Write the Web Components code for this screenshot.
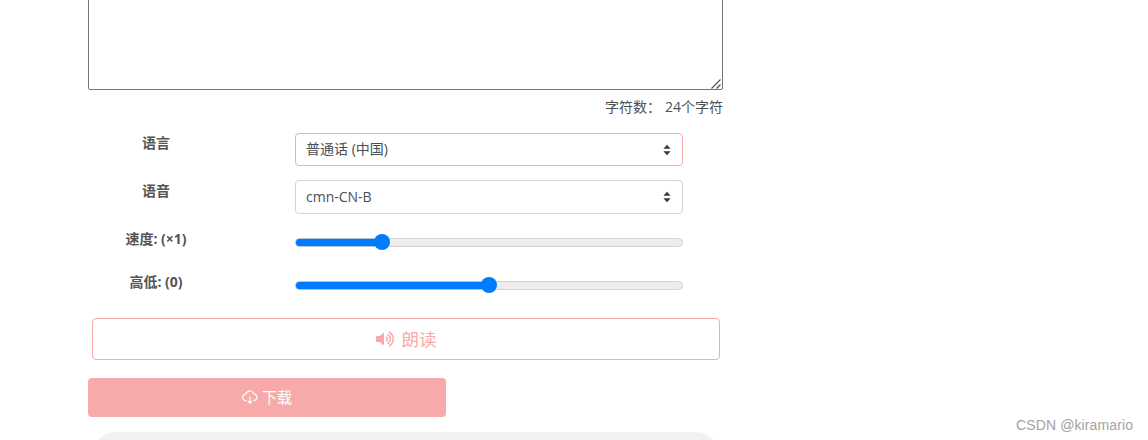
<!DOCTYPE html>
<html lang="zh"><head><meta charset="utf-8"><title>TTS</title>
<style>
html,body{margin:0;padding:0;background:#fff;}
body{height:440px;overflow:hidden;font-family:"Open Sans","Noto Sans CJK SC",sans-serif;color:#495057;font-size:14px;}
</style></head><body>
<tts-app></tts-app>
<tts-mark>CSDN @kiramario</tts-mark>
<template id="t-mark"><style>
:host{display:block;position:absolute;left:1016px;top:416px;width:125px;font:14px/18px "Liberation Sans",sans-serif;color:#a3a3a3;letter-spacing:.12px;white-space:nowrap}
</style><slot></slot></template>
<template id="t-row"><style>
:host{display:flex;align-items:flex-start;height:var(--h,47px);}
.l{width:136px;margin-right:71px;margin-top:var(--lt,0px);text-align:center;font-weight:700;font-size:14px;line-height:20px;color:#555;flex:none}
.c{width:388px;flex:none;padding-top:var(--ct,0px)}
</style><div class="l" part="label"><slot name="label"></slot></div><div class="c"><slot></slot></div></template>
<template id="t-select"><style>
:host{display:block;position:relative;height:var(--sh,34px);}
select{appearance:none;-webkit-appearance:none;display:block;width:100%;height:100%;box-sizing:border-box;background:#fff;border:1px solid var(--b,#ced4da);border-radius:4px;padding:0 30px 2px 10px;font:14px "Open Sans","Noto Sans CJK SC",sans-serif;color:#495057;outline:none;margin:0}
svg{position:absolute;right:12px;top:50%;margin-top:-6px;width:8px;height:12px;pointer-events:none}
</style><select></select><svg viewBox="0 0 8 12"><path fill="#343a40" d="M4 .8 7.6 4.8H.4zM4 11.2.4 7.2h7.2z"/></svg></template>
<template id="t-slider"><style>
:host{display:block;height:16px;}
input{appearance:none;-webkit-appearance:none;display:block;width:100%;height:16px;margin:0;padding:0;background:transparent;outline:none}
input::-webkit-slider-runnable-track{height:9px;border-radius:5px;box-sizing:border-box;border:1px solid #d2d2d2;background:#ededed;}
input::-webkit-slider-thumb{-webkit-appearance:none;width:16px;height:16px;border-radius:50%;background:#007bff;margin-top:-4.5px;border:0}
.w{position:relative;height:16px}
.f{position:absolute;left:1px;top:5px;height:7px;border-radius:4px 0 0 4px;background:#007bff;pointer-events:none;box-shadow:0 0 0 .5px rgba(0,123,255,.35)}
</style><div class="w"><input type="range" min="0" max="100"><div class="f"></div></div></template>
<template id="t-app"><style>
:host{display:block;width:635px;margin-left:88px;height:440px;overflow:hidden}
.ta{position:relative;margin-top:-10px;height:100px}
textarea{display:block;box-sizing:border-box;width:635px;height:100px;margin:0;border:1px solid #767676;border-radius:2px;background:#fff;outline:none;padding:2px;resize:none}
.grip{position:absolute;right:2px;bottom:1px;width:10px;height:10px;fill:none;stroke:#555;stroke-width:1.3}
.count{text-align:right;font-size:14px;line-height:20px;height:43px;padding-top:7px;box-sizing:border-box;color:#495057}
.count span{margin-left:4px}
.read{display:flex;align-items:center;justify-content:center;gap:8px;box-sizing:border-box;width:628px;height:42px;margin:0 0 18px 4px;border:1px solid #f8aaaa;border-radius:4px;background:#fff;color:#f8aaaa;font:17.5px "Open Sans","Noto Sans CJK SC",sans-serif;padding:0 0 1px}
.read svg{width:18px;height:16px;fill:#f8aaaa}
.dl{display:flex;align-items:center;justify-content:center;gap:4px;box-sizing:border-box;width:358px;height:39px;margin:0 0 15px;border:0;border-radius:4px;background:#f8aaaa;color:#fff;font:15px "Open Sans","Noto Sans CJK SC",sans-serif;padding:0 0 2px}
.dl svg{width:16px;height:14px;fill:none;stroke:#fff;stroke-width:1.1}
.clip{height:8px;overflow:hidden;margin-left:4px;width:628px}
.panel{height:60px;background:#f1f2f4;border-radius:24px}
</style>
<div class="ta"><textarea></textarea><svg class="grip" viewBox="0 0 10 10"><path d="M.5 9.5 9.5.5M5.5 9.5 9.5 5.5"/></svg></div>
<div class="count">字符数：<span>24个字符</span></div>
<tts-row id="r1" style="--h:47px"><span slot="label">语言</span><tts-select style="--b:#f8aaaa;--sh:33px" data-v="普通话 (中国)"></tts-select></tts-row>
<tts-row style="--h:50px;--lt:1px"><span slot="label">语音</span><tts-select data-v="cmn-CN-B"></tts-select></tts-row>
<tts-row style="--h:43px;--ct:4px;--lt:-1px"><span slot="label">速度: (×1)</span><tts-slider data-v="21.2"></tts-slider></tts-row>
<tts-row style="--h:45px;--ct:4px;--lt:-1px"><span slot="label">高低: (0)</span><tts-slider data-v="50"></tts-slider></tts-row>
<button class="read" type="button"><svg viewBox="0 0 576 512"><path d="M215.03 71.05L126.06 160H24c-13.26 0-24 10.74-24 24v144c0 13.25 10.74 24 24 24h102.06l88.97 88.95c15.03 15.03 40.97 4.47 40.97-16.97V88.02c0-21.46-25.96-31.98-40.97-16.97zm233.32-51.08c-11.17-7.33-26.18-4.24-33.51 6.95-7.34 11.17-4.22 26.18 6.95 33.51 66.27 43.49 105.82 116.6 105.82 195.58 0 78.98-39.55 152.09-105.82 195.58-11.17 7.32-14.29 22.34-6.95 33.5 7.04 10.71 21.93 14.56 33.51 6.95C528.27 439.58 576 351.33 576 256S528.27 72.43 448.35 19.97zM480 256c0-63.53-32.06-121.94-85.77-156.24-11.19-7.14-26.03-3.82-33.12 7.46s-3.78 26.21 7.41 33.36C408.27 165.97 432 209.11 432 256s-23.73 90.03-63.48 115.42c-11.19 7.14-14.5 22.07-7.41 33.36 6.51 10.36 21.12 15.14 33.12 7.46C447.94 377.94 480 319.54 480 256zm-141.77-76.87c-11.58-6.33-26.19-2.16-32.61 9.45-6.39 11.61-2.16 26.2 9.45 32.61C327.98 228.28 336 241.63 336 256c0 14.38-8.02 27.72-20.92 34.81-11.61 6.41-15.84 21-9.45 32.61 6.44 11.66 21.05 15.8 32.61 9.45 28.23-15.55 45.77-45 45.77-76.88s-17.54-61.32-45.78-76.86z"/></svg><span>朗读</span></button>
<button class="dl" type="button"><svg viewBox="0 0 16 14"><path d="M4.6 10.6H4A3.2 3.2 0 0 1 3.7 4.2 4.3 4.3 0 0 1 11.8 3.7 3.5 3.5 0 0 1 12 10.6h-.6"/><path d="M8 6.6V13M5.9 11 8 13.2 10.1 11"/></svg><span>下载</span></button>
<div class="clip"><div class="panel"></div></div>
</template>
<script>
function sh(el,id){const r=el.attachShadow({mode:'open'});r.appendChild(document.getElementById(id).content.cloneNode(true));return r;}
customElements.define('tts-mark',class extends HTMLElement{constructor(){super();sh(this,'t-mark');}});
customElements.define('tts-row',class extends HTMLElement{constructor(){super();sh(this,'t-row');}});
customElements.define('tts-select',class extends HTMLElement{connectedCallback(){if(this.shadowRoot)return;const r=sh(this,'t-select');const o=document.createElement('option');o.textContent=this.dataset.v;r.querySelector('select').appendChild(o);}});
customElements.define('tts-slider',class extends HTMLElement{connectedCallback(){if(this.shadowRoot)return;const r=sh(this,'t-slider');const v=+this.dataset.v;r.querySelector('input').value=v;r.querySelector('.f').style.width=`calc(7px + (100% - 16px) * ${v/100})`;}});
customElements.define('tts-app',class extends HTMLElement{constructor(){super();sh(this,'t-app');}});
</script>
</body></html>
